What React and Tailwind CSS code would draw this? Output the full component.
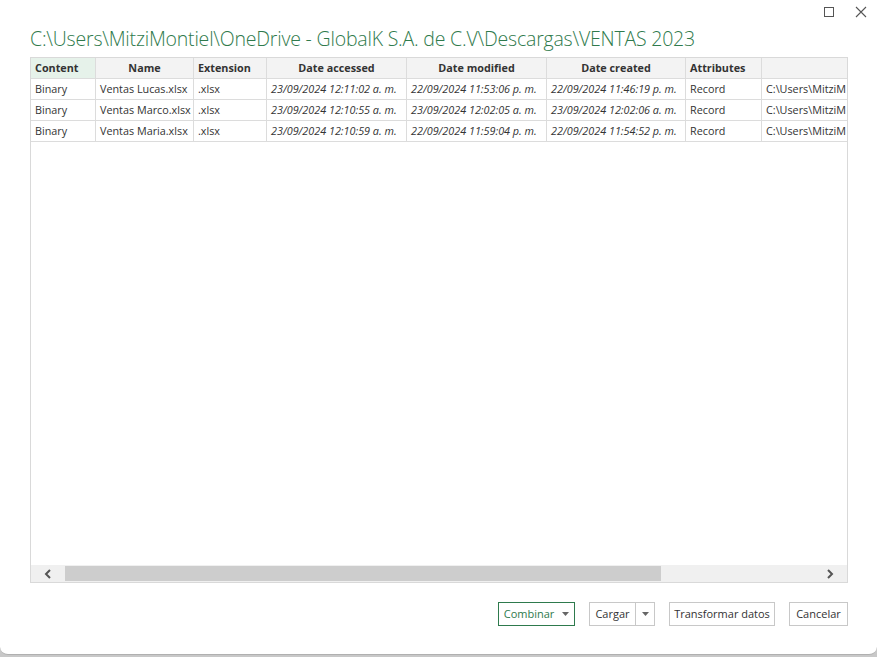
import React from "react";

const cols = [
  { label: "Content", w: "w-[65px]", align: "text-left", hl: true },
  { label: "Name", w: "w-[98px]", align: "text-center" },
  { label: "Extension", w: "w-[73px]", align: "text-left" },
  { label: "Date accessed", w: "w-[140px]", align: "text-center" },
  { label: "Date modified", w: "w-[140px]", align: "text-center" },
  { label: "Date created", w: "w-[139px]", align: "text-center" },
  { label: "Attributes", w: "w-[76px]", align: "text-left" },
  { label: "", w: "w-[90px]", align: "text-left" },
];

const rows = [
  ["Binary", "Ventas Lucas.xlsx", ".xlsx", "23/09/2024 12:11:02 a. m.", "22/09/2024 11:53:06 p. m.", "22/09/2024 11:46:19 p. m.", "Record", "C:\\Users\\MitziM"],
  ["Binary", "Ventas Marco.xlsx", ".xlsx", "23/09/2024 12:10:55 a. m.", "23/09/2024 12:02:05 a. m.", "23/09/2024 12:02:06 a. m.", "Record", "C:\\Users\\MitziM"],
  ["Binary", "Ventas Maria.xlsx", ".xlsx", "23/09/2024 12:10:59 a. m.", "22/09/2024 11:59:04 p. m.", "22/09/2024 11:54:52 p. m.", "Record", "C:\\Users\\MitziM"],
];

const Caret = () => (
  <svg width="7" height="4" viewBox="0 0 7 4" className="fill-[#666]">
    <path d="M0 0h7L3.5 4z" />
  </svg>
);

export default function App() {
  return (
    <div className="w-[877px] h-[657px] bg-[#c8c8c8] overflow-hidden font-['Open_Sans',sans-serif] text-[#333]">
      <div className="h-[655px] bg-white rounded-b-[8px] border-b border-[#b0b0b0] flex flex-col">
        <div className="flex justify-end items-center h-[22px] pr-[10px] gap-[21px] pt-[2px]">
          <div className="w-[10px] h-[10px] border border-[#555]" />
          <svg width="12" height="12" viewBox="0 0 12 12" className="stroke-[#555]">
            <path d="M1 1L11 11M11 1L1 11" strokeWidth="1.1" />
          </svg>
        </div>
        <div className="pl-[30px] pt-[3px] h-[35px] text-[19.5px] font-light text-[#2f7a4c] tracking-[-0.2px] leading-[28px] whitespace-nowrap">
          C:\Users\MitziMontiel\OneDrive - GlobalK S.A. de C.V\Descargas\VENTAS 2023
        </div>
        <div className="ml-[30px] w-[818px] h-[526px] border border-[#d9d9d9] flex flex-col text-[10.8px]">
          <div className="flex-1 overflow-hidden">
            <div className="flex h-[21px] border-b border-[#dcdcdc] bg-[#f3f3f3] font-bold">
              {cols.map((c, i) => (
                <div
                  key={i}
                  className={`${c.w} shrink-0 px-[4px] leading-[20px] border-r border-[#dcdcdc] ${c.align} ${c.hl ? "bg-[#e6f2ea]" : ""}`}
                >
                  {c.label}
                </div>
              ))}
            </div>
            {rows.map((r, ri) => (
              <div key={ri} className="flex h-[21px] border-b border-[#dcdcdc]">
                {r.map((v, i) => (
                  <div
                    key={i}
                    className={`${cols[i].w} shrink-0 px-[4px] leading-[20px] border-r border-[#dcdcdc] whitespace-nowrap overflow-hidden ${i >= 3 && i <= 5 ? "italic" : ""}`}
                  >
                    {v}
                  </div>
                ))}
              </div>
            ))}
          </div>
          <div className="h-[17px] bg-[#f0f0f0] flex items-center">
            <div className="w-[34px] flex justify-center">
              <svg width="8" height="10" viewBox="0 0 8 10" className="stroke-[#555] fill-none">
                <path d="M6 1L2 5l4 4" strokeWidth="2" />
              </svg>
            </div>
            <div className="w-[596px] h-[15px] bg-[#cdcdcd]" />
            <div className="flex-1" />
            <div className="w-[34px] flex justify-center">
              <svg width="8" height="10" viewBox="0 0 8 10" className="stroke-[#555] fill-none">
                <path d="M2 1l4 4-4 4" strokeWidth="2" />
              </svg>
            </div>
          </div>
        </div>
        <div className="flex justify-end gap-[14px] pr-[29px] pt-[19px] text-[11px]">
          <button className="h-[24px] w-[77px] border border-[#2e7a4d] text-[#2e7a4d] flex items-center justify-center gap-[8px]">
            Combinar <Caret />
          </button>
          <div className="h-[24px] w-[66px] border border-[#c8c8c8] flex">
            <span className="flex-1 flex items-center justify-center border-r border-[#c8c8c8]">Cargar</span>
            <span className="w-[18px] flex items-center justify-center"><Caret /></span>
          </div>
          <button className="h-[24px] w-[106px] border border-[#c8c8c8] flex items-center justify-center whitespace-nowrap">
            Transformar datos
          </button>
          <button className="h-[24px] w-[59px] border border-[#c8c8c8] flex items-center justify-center">
            Cancelar
          </button>
        </div>
      </div>
    </div>
  );
}
